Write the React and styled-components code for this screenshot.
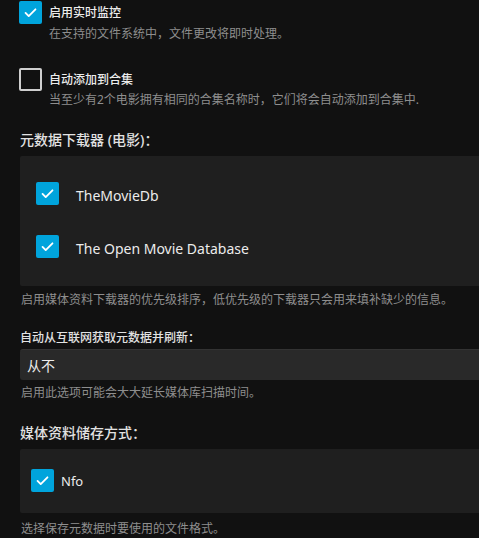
import React from 'react';
import styled, { createGlobalStyle } from 'styled-components';

const GlobalStyle = createGlobalStyle`
  html, body {
    margin: 0;
    padding: 0;
    background: #111111;
    overflow: hidden;
  }

  body {
    font-family: "Noto Sans", "Noto Sans CJK SC", sans-serif;
    color: #e6e6e6;
  }
`;

const Page = styled.div`
  width: calc(100% + 40px);
  padding: 0 0 0 20px;
  margin-top: 1px;
  box-sizing: border-box;
`;

const CheckField = styled.div`
  margin-left: -1px;
  margin-top: ${(p) => p.$top || 0}px;
`;

const CheckRow = styled.label`
  display: flex;
  align-items: center;
  gap: ${(p) => p.$gap || 7}px;
  height: 23px;
`;

const Box = styled.span`
  flex: none;
  display: flex;
  align-items: center;
  justify-content: center;
  width: 23px;
  height: 23px;
  box-sizing: border-box;
  border-radius: 2px;
  background: ${(p) => (p.$checked ? '#00a4dc' : 'transparent')};
  border: ${(p) => (p.$checked ? 'none' : '2px solid #cfcfcf')};
`;

const Label = styled.span`
  font-size: ${(p) => p.$size || 12}px;
  line-height: 23px;
  padding-top: ${(p) => p.$drop || 0}px;
  font-weight: ${(p) => p.$weight || 500};
  color: #ececec;
`;

const Hint = styled.div`
  font-size: 12px;
  line-height: 18px;
  color: #8e8e8e;
  margin-top: ${(p) => p.$top || 0}px;
  padding-left: ${(p) => p.$indent || 0}px;
`;

const Heading = styled.h3`
  margin: ${(p) => p.$top}px 0 0;
  font-size: ${(p) => p.$size}px;
  line-height: ${(p) => (p.$size > 13 ? 20 : 18)}px;
  font-weight: 500;
  color: #e2e2e2;
`;

const Panel = styled.div`
  margin-top: 6px;
  background: #1f1f1f;
  border-radius: 2px;
  padding: ${(p) => p.$pad};
  display: flex;
  flex-direction: column;
  gap: 30px;
`;

const Select = styled.div`
  margin-top: 2px;
  height: 31px;
  display: flex;
  align-items: center;
  padding: 0 7px;
  background: #292929;
  border-top: 1px solid #333;
  box-sizing: border-box;
  border-radius: 3px;
  font-size: 14px;
  color: #ececec;
`;

function Check({ checked }) {
  return (
    <Box $checked={checked}>
      {checked ? (
        <svg width="17" height="17" viewBox="0 0 24 24" fill="none">
          <path
            d="M5 12.5l4.5 4.5L19 7.5"
            stroke="#fff"
            strokeWidth="2.6"
            strokeLinecap="round"
            strokeLinejoin="round"
          />
        </svg>
      ) : null}
    </Box>
  );
}

export default function App() {
  return (
    <>
      <GlobalStyle />
      <Page>
        <CheckField>
          <CheckRow>
            <Check checked />
            <Label>启用实时监控</Label>
          </CheckRow>
          <Hint $top={1} $indent={30}>
            在支持的文件系统中，文件更改将即时处理。
          </Hint>
        </CheckField>

        <CheckField $top={25}>
          <CheckRow>
            <Check />
            <Label>自动添加到合集</Label>
          </CheckRow>
          <Hint $indent={30}>
            当至少有2个电影拥有相同的合集名称时，它们将会自动添加到合集中.
          </Hint>
        </CheckField>

        <Heading $top={21} $size={14}>
          元数据下载器 (电影)：
        </Heading>
        <Panel $pad="26px 16px 28px">
          <CheckRow $gap={17}>
            <Check checked />
            <Label $size={14} $weight={400} $drop={3}>TheMovieDb</Label>
          </CheckRow>
          <CheckRow $gap={17}>
            <Check checked />
            <Label $size={14} $weight={400} $drop={3}>The Open Movie Database</Label>
          </CheckRow>
        </Panel>
        <Hint $top={5} $indent={1}>
          启用媒体资料下载器的优先级排序，低优先级的下载器只会用来填补缺少的信息。
        </Hint>

        <Heading $top={20} $size={12}>
          自动从互联网获取元数据并刷新：
        </Heading>
        <Select>从不</Select>
        <Hint $top={4} $indent={1}>
          启用此选项可能会大大延长媒体库扫描时间。
        </Hint>

        <Heading $top={21} $size={14}>
          媒体资料储存方式：
        </Heading>
        <Panel $pad="20px 11px 21px">
          <CheckRow>
            <Check checked />
            <Label $size={13} $weight={400} $drop={2}>Nfo</Label>
          </CheckRow>
        </Panel>
        <Hint $top={7} $indent={1}>
          选择保存元数据时要使用的文件格式。
        </Hint>
      </Page>
    </>
  );
}
